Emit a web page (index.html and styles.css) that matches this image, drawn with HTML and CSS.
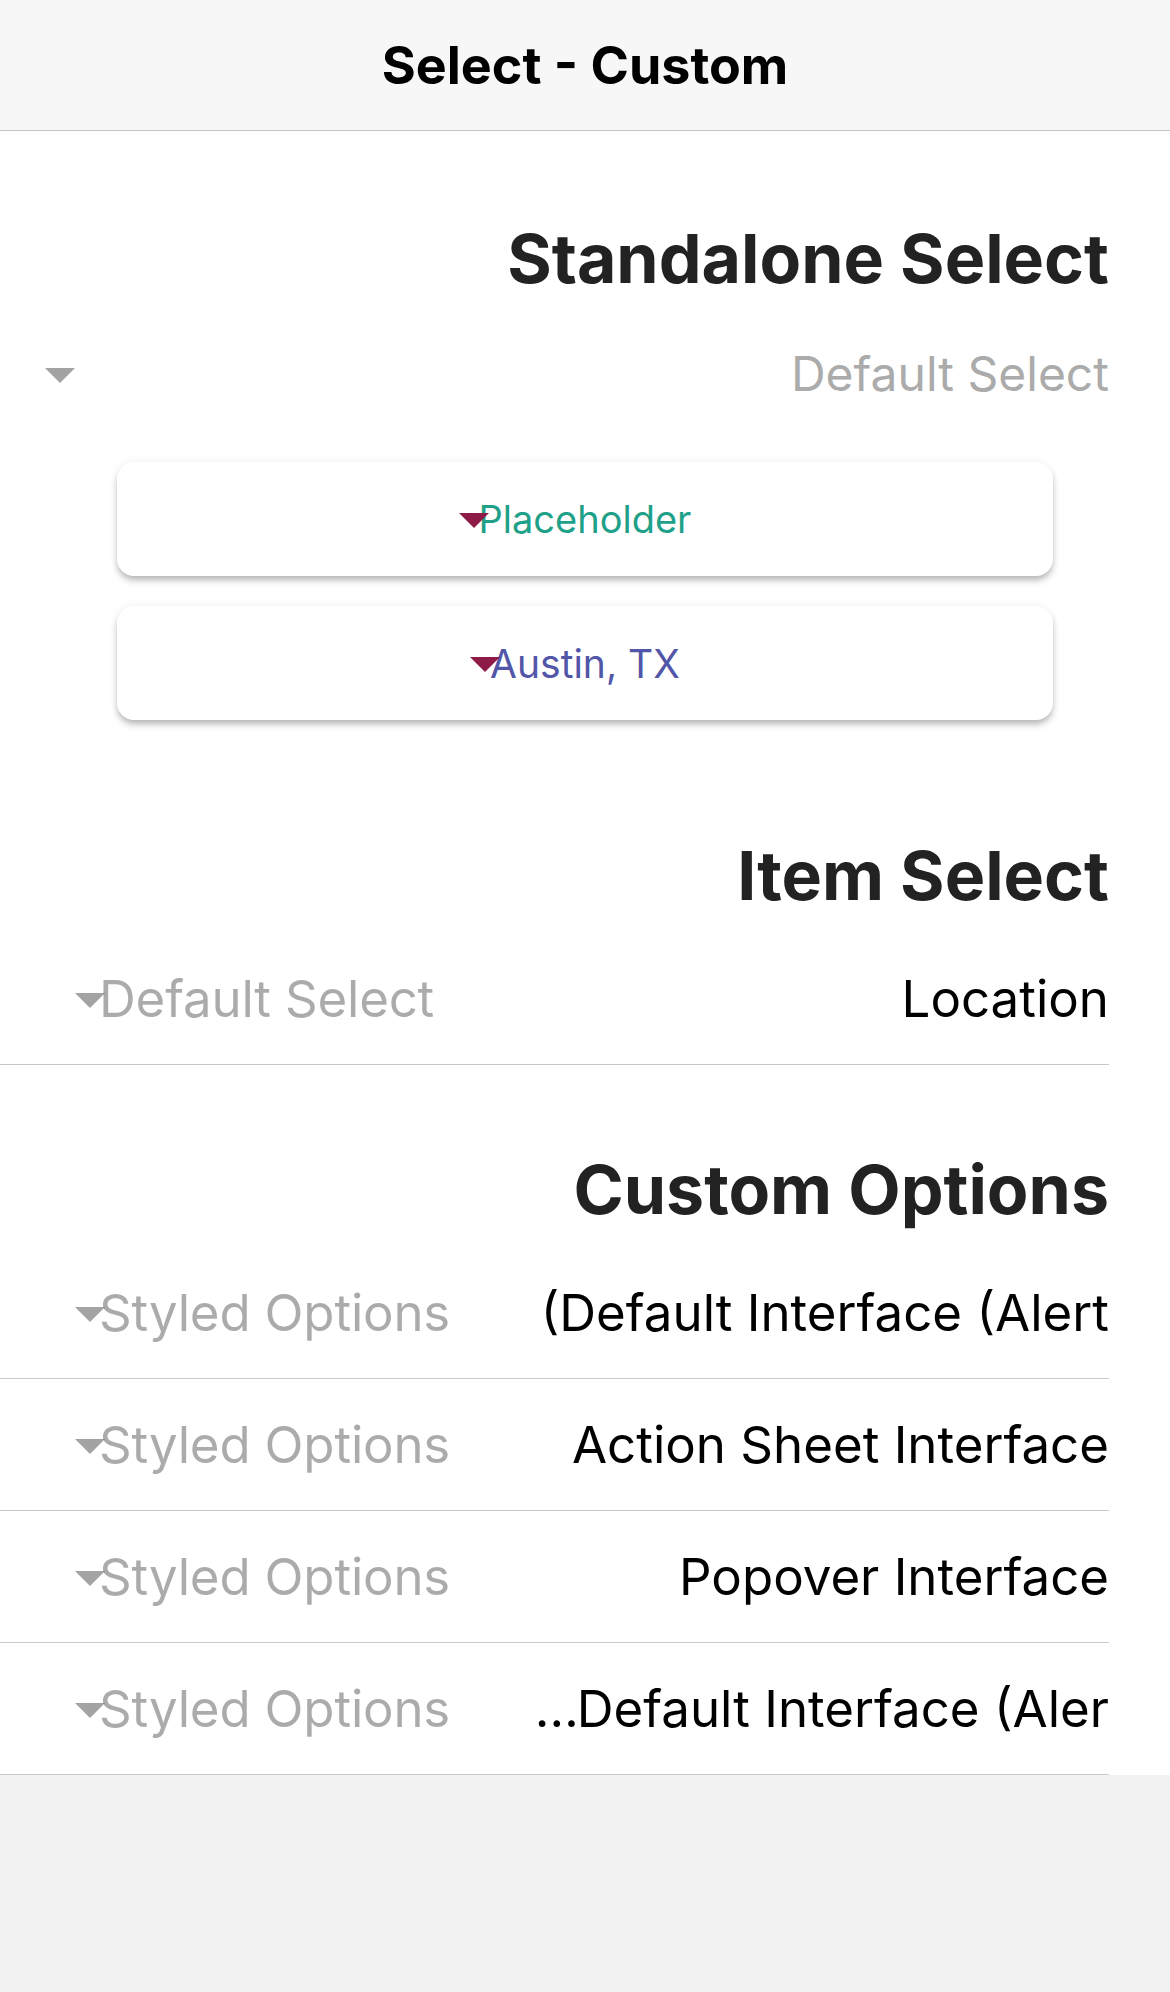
FILE: index.html
```html
<!DOCTYPE html>
<html lang="en">
<head>
<meta charset="utf-8">
<title>Select - Custom</title>
<link rel="stylesheet" href="styles.css">
</head>
<body>
<header class="toolbar">
  <h1 class="toolbar-title">Select - Custom</h1>
</header>
<main class="content">
  <h2 class="section-title">Standalone Select</h2>
  <div class="standalone">
    <span class="arrow arrow-solid"></span>
    <span class="standalone-text">Default Select</span>
  </div>
  <div class="cards">
    <div class="card"><span class="card-value card-green">Placeholder</span></div>
    <div class="card"><span class="card-value card-blue">Austin, TX</span></div>
  </div>

  <h2 class="section-title">Item Select</h2>
  <div class="list">
    <div class="row">
      <div class="select"><span class="arrow"></span><span class="select-text">Default Select</span></div>
      <div class="label">Location</div>
    </div>
  </div>

  <h2 class="section-title">Custom Options</h2>
  <div class="list">
    <div class="row">
      <div class="select"><span class="arrow"></span><span class="select-text">Styled Options</span></div>
      <div class="label">(Default Interface (Alert</div>
    </div>
    <div class="row">
      <div class="select"><span class="arrow"></span><span class="select-text">Styled Options</span></div>
      <div class="label">Action Sheet Interface</div>
    </div>
    <div class="row">
      <div class="select"><span class="arrow"></span><span class="select-text">Styled Options</span></div>
      <div class="label">Popover Interface</div>
    </div>
    <div class="row">
      <div class="select"><span class="arrow"></span><span class="select-text">Styled Options</span></div>
      <div class="label"><span class="ellipsis">…</span>Default Interface (Aler</div>
    </div>
  </div>
</main>
</body>
</html>
```

FILE: styles.css
```css
html, body {
  margin: 0;
  padding: 0;
}

body {
  background: #f2f2f2;
  font-family: Inter, "Noto Sans", "Liberation Sans", sans-serif;
  color: #000;
}

.toolbar {
  height: 130px;
  background: #f7f7f7;
  border-bottom: 1px solid #c4c4c4;
  display: flex;
  align-items: center;
  justify-content: center;
}

.toolbar-title {
  margin: 0;
  font-size: 52px;
  font-weight: 700;
  color: #000;
}

.content {
  display: flow-root;
  background: #fff;
}

.section-title {
  margin: 87px 61px 0 0;
  font-size: 68px;
  line-height: 80px;
  font-weight: 700;
  text-align: right;
  color: #222;
}

.list + .section-title {
  margin-top: 84px;
}

.standalone {
  display: flex;
  align-items: center;
  justify-content: space-between;
  height: 56px;
  margin: 48px 61px 0 0;
  padding-left: 45px;
}

.standalone-text {
  font-size: 48px;
  line-height: 56px;
  color: #ababab;
  white-space: nowrap;
}

.arrow {
  width: 0;
  height: 0;
  border-left: 15px solid transparent;
  border-right: 15px solid transparent;
  border-top: 15px solid rgba(0, 0, 0, 0.36);
  flex: none;
}

.arrow-solid {
  border-top-color: #a3a3a3;
  margin-top: 2px;
}

.cards {
  margin-top: 60px;
  padding-bottom: 28px;
}

.card {
  width: 80%;
  height: 114px;
  margin: 0 auto;
  background: #fff;
  border-radius: 17px;
  box-shadow: 0 5px 7px -1px rgba(0, 0, 0, 0.28), 0 0 10px rgba(0, 0, 0, 0.06);
  display: flex;
  align-items: center;
  justify-content: center;
}

.card + .card {
  margin-top: 30px;
}

.card-value {
  position: relative;
  font-size: 38px;
}

.card-value::before {
  content: "";
  position: absolute;
  left: -20px;
  top: 17px;
  width: 0;
  height: 0;
  border-left: 15px solid transparent;
  border-right: 15px solid transparent;
  border-top: 15px solid #8e1b47;
}

.card-green {
  color: #1fa088;
}

.card-blue {
  color: #5256a8;
  font-size: 39px;
}

.list {
  margin: 18px 61px 0 0;
}

.row {
  display: flex;
  align-items: center;
  justify-content: space-between;
  height: 131px;
  border-bottom: 1px solid #c8c7cc;
}

.select {
  display: flex;
  align-items: center;
  padding-left: 75px;
}

.select .arrow {
  margin-top: 4px;
}

.select-text {
  margin-left: -6px;
  font-size: 51px;
  letter-spacing: -0.2px;
  color: rgba(0, 0, 0, 0.33);
  white-space: nowrap;
}

.label {
  font-size: 51px;
  color: #000;
  white-space: nowrap;
}

.ellipsis {
  letter-spacing: -4px;
  margin-right: 2px;
}
```
